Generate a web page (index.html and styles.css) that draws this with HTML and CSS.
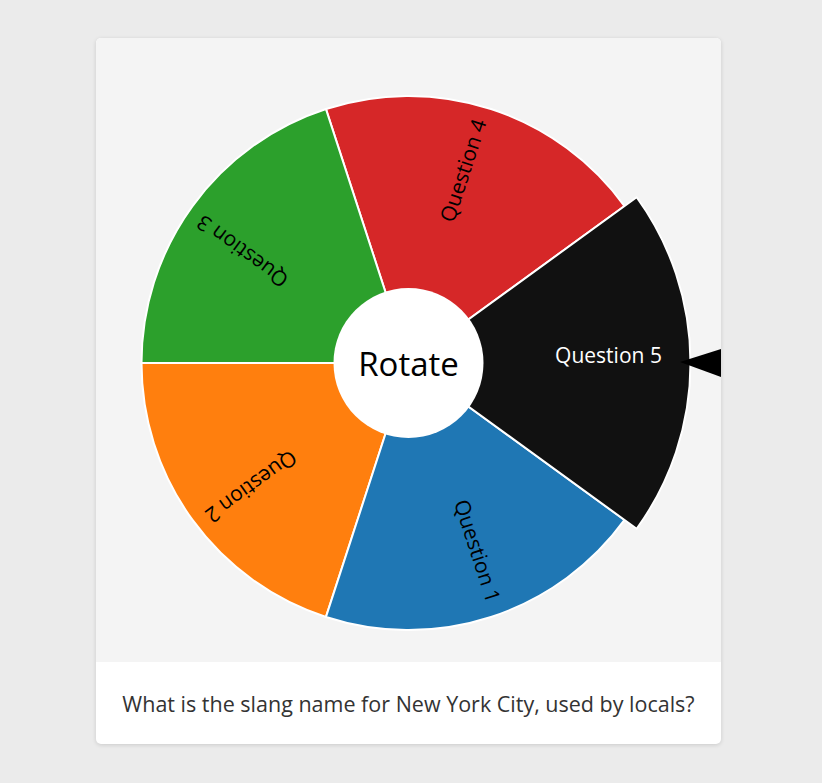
FILE: index.html
```html
<!DOCTYPE html>
<html lang="en">
<head>
<meta charset="utf-8">
<title>Wheel</title>
<link rel="stylesheet" href="styles.css">
</head>
<body>
<div class="card">
  <div class="wheel-area">
    <svg class="wheel" width="625" height="624" viewBox="0 0 625 624">
      <g class="slices">
        <path class="s-red" d="M312.5 325 L528.51 168.06 A267 267 0 0 0 229.99 71.07 Z"/>
        <path class="s-green" d="M312.5 325 L229.99 71.07 A267 267 0 0 0 45.5 325 Z"/>
        <path class="s-orange" d="M312.5 325 L45.5 325 A267 267 0 0 0 229.99 578.93 Z"/>
        <path class="s-blue" d="M312.5 325 L229.99 578.93 A267 267 0 0 0 528.51 481.94 Z"/>
        <path class="s-black" d="M312.5 325 L540.64 490.76 A282 282 0 0 0 540.64 159.24 Z"/>
      </g>
      <g class="labels">
        <text class="lbl lbl-light" x="512.5" y="325">Question 5</text>
        <text class="lbl" x="374.3" y="134.8" transform="rotate(-72 374.3 134.8)">Question 4</text>
        <text class="lbl" x="150.7" y="207.4" transform="rotate(-144 150.7 207.4)">Question 3</text>
        <text class="lbl" x="150.7" y="442.6" transform="rotate(144 150.7 442.6)">Question 2</text>
        <text class="lbl" x="374.3" y="515.2" transform="rotate(72 374.3 515.2)">Question 1</text>
      </g>
      <g class="hub">
        <circle cx="312.5" cy="325" r="75"/>
        <text class="hub-text" x="312.5" y="325">Rotate</text>
      </g>
      <polygon class="pointer" points="584,324 625,311 625,339"/>
    </svg>
  </div>
  <div class="question">What is the slang name for New York City, used by locals?</div>
</div>
</body>
</html>
```

FILE: styles.css
```css
html, body {
  margin: 0;
  padding: 0;
}
body {
  background: #ebebeb;
  font-family: "Open Sans", "Noto Sans", sans-serif;
  min-height: 783px;
}
.card {
  width: 625px;
  margin: 38px 0 0 96px;
  border-radius: 5px;
  overflow: hidden;
  background: #ffffff;
  box-shadow: 0 1px 4px rgba(0, 0, 0, 0.14);
}
.wheel-area {
  height: 624px;
  background: #f4f4f4;
}
.wheel {
  display: block;
}
.slices path {
  stroke: #ffffff;
  stroke-width: 2;
  stroke-linejoin: round;
}
.s-red { fill: #d62728; }
.s-green { fill: #2ca02c; }
.s-orange { fill: #ff7f0e; }
.s-blue { fill: #1f77b4; }
.s-black { fill: #111111; }
.lbl {
  font-family: "Open Sans", "Noto Sans", sans-serif;
  font-size: 21px;
  fill: #000000;
  text-anchor: middle;
}
.lbl-light {
  fill: #ffffff;
}
.hub circle {
  fill: #ffffff;
}
.hub-text {
  font-family: "Open Sans", "Noto Sans", sans-serif;
  font-size: 33px;
  fill: #000000;
  text-anchor: middle;
  dominant-baseline: central;
}
.pointer {
  fill: #000000;
}
.question {
  height: 82px;
  display: flex;
  align-items: center;
  justify-content: center;
  font-size: 21.5px;
  color: #333333;
}
```
